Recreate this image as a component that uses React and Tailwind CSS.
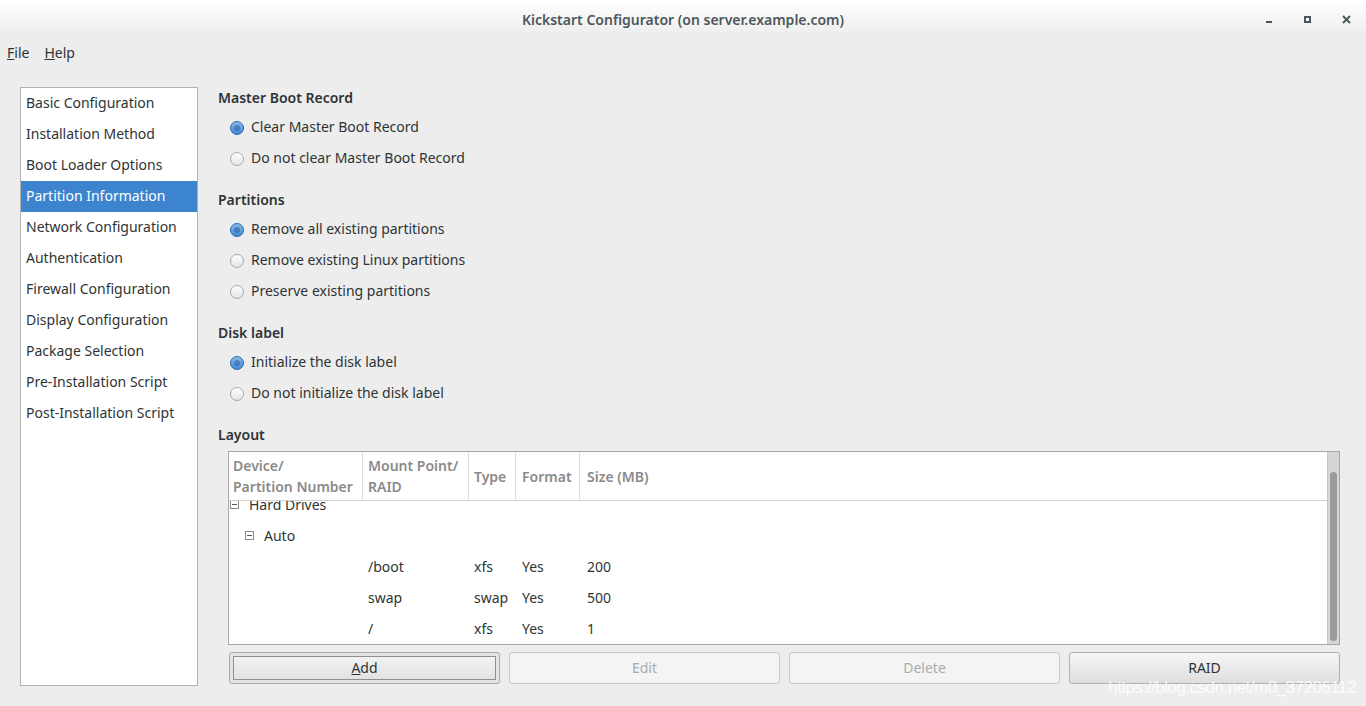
import React from 'react'

const sections = [
  "Basic Configuration",
  "Installation Method",
  "Boot Loader Options",
  "Partition Information",
  "Network Configuration",
  "Authentication",
  "Firewall Configuration",
  "Display Configuration",
  "Package Selection",
  "Pre-Installation Script",
  "Post-Installation Script",
];

const groups = [
  { title: "Master Boot Record", options: ["Clear Master Boot Record", "Do not clear Master Boot Record"] },
  { title: "Partitions", options: ["Remove all existing partitions", "Remove existing Linux partitions", "Preserve existing partitions"] },
  { title: "Disk label", options: ["Initialize the disk label", "Do not initialize the disk label"] },
];

const parts = [
  { mount: "/boot", type: "xfs", format: "Yes", size: "200" },
  { mount: "swap", type: "swap", format: "Yes", size: "500" },
  { mount: "/", type: "xfs", format: "Yes", size: "1" },
];

function Radio({ checked }) {
  return (
    <svg width="14" height="14" viewBox="0 0 14 14" className="shrink-0 mt-[2px]">
      <defs>
        <linearGradient id="rOff" x1="0" y1="0" x2="0" y2="1">
          <stop offset="0" stopColor="#ffffff" />
          <stop offset="1" stopColor="#e4e4e4" />
        </linearGradient>
        <linearGradient id="rOn" x1="0" y1="0" x2="0" y2="1">
          <stop offset="0" stopColor="#8fbbea" />
          <stop offset="1" stopColor="#3c86d6" />
        </linearGradient>
      </defs>
      <circle cx="7" cy="7" r="6.5" fill={checked ? "url(#rOn)" : "url(#rOff)"} stroke={checked ? "#3069a8" : "#a8a8a8"} />
      {checked && <circle cx="7" cy="7" r="3" fill="#2a5f9e" opacity="0.55" />}
    </svg>
  );
}

function Expander({ className }) {
  return (
    <svg width="9" height="9" viewBox="0 0 9 9" className={className}>
      <rect x="0.5" y="0.5" width="8" height="8" fill="#fff" stroke="#8a8a8a" />
      <line x1="2" y1="4.5" x2="7" y2="4.5" stroke="#555" />
    </svg>
  );
}

const App = () => {
  return (
    <div className="relative w-[1366px] h-[706px] overflow-hidden bg-[#ededed] text-[#2e3436] text-[14px]" style={{ fontFamily: '"Noto Sans", "Open Sans", sans-serif' }}>
      {/* title bar */}
      <div className="h-[38px] bg-gradient-to-b from-[#ffffff] to-[#ececec] flex items-center relative">
        <div className="flex-1 text-center text-[#4d575b] font-semibold text-[14px]">Kickstart Configurator (on server.example.com)</div>
        <div className="absolute right-0 top-0 h-[38px] flex items-center">
          <div className="w-[39px] flex justify-center pt-[4px]"><div className="w-[6px] h-[2px] bg-[#4d575b] mt-[2px]"></div></div>
          <div className="w-[39px] flex justify-center"><div className="w-[7px] h-[7px] border-2 border-[#4d575b]"></div></div>
          <div className="w-[39px] flex justify-center text-[#4d575b]">
            <svg width="9" height="9" viewBox="0 0 9 9"><path d="M1 1L8 8M8 1L1 8" stroke="#4d575b" strokeWidth="2" /></svg>
          </div>
        </div>
      </div>

      {/* menu */}
      <div className="h-[30px] flex items-center gap-[15px] px-[7px] pb-[2px]">
        <span><span className="underline">F</span>ile</span>
        <span><span className="underline">H</span>elp</span>
      </div>

      <div className="flex pt-[19px] pl-[20px] pr-[26px]">
        <div className="w-[178px] h-[599px] bg-white border border-[#b1b1b1] shrink-0">
          {sections.map((s, i) => (
            <div key={s} className={"h-[31px] flex items-center px-[5px] pb-[2px] " + (i === 3 ? "bg-[#3d84cf] text-white" : "")}>{s}</div>
          ))}
        </div>

        <div className="flex-1 ml-[20px]">
          {groups.map((g, gi) => (
            <div key={g.title} className={gi > 0 ? "mt-[15px]" : ""}>
              <div className="h-[25px] leading-[22px] font-semibold">{g.title}</div>
              {g.options.map((o, oi) => (
                <div key={o} className="h-[31px] flex items-center gap-[7px] pl-[12px] pb-[2px]">
                  <Radio checked={oi === 0} />
                  <span>{o}</span>
                </div>
              ))}
            </div>
          ))}

          <div className="mt-[15px] h-[25px] leading-[22px] font-semibold">Layout</div>
          <div className="ml-[10px] mt-[2px] h-[194px] bg-white border border-[#a8a8a8] flex">
            <div className="flex-1 flex flex-col min-w-0">
              <div className="h-[49px] border-b border-[#d0d0d0] flex text-[#8a8a8a] font-semibold leading-[21px] shrink-0">
                <div className="w-[134px] border-r border-[#dcdcdc] px-[4px] flex flex-col justify-center">
                  <div>Device/</div><div>Partition Number</div>
                </div>
                <div className="w-[106px] border-r border-[#dcdcdc] px-[5px] flex flex-col justify-center">
                  <div>Mount Point/</div><div>RAID</div>
                </div>
                <div className="w-[47px] border-r border-[#dcdcdc] px-[5px] flex items-center">Type</div>
                <div className="w-[64px] border-r border-[#dcdcdc] px-[6px] flex items-center">Format</div>
                <div className="flex-1 px-[7px] flex items-center">Size (MB)</div>
              </div>
              <div className="flex-1 overflow-hidden">
                <div className="mt-[-12px]">
                  <div className="h-[31px] flex items-center pl-[1px]">
                    <Expander className="mr-[10px]" />
                    <span>Hard Drives</span>
                  </div>
                  <div className="h-[31px] flex items-center pl-[16px]">
                    <Expander className="mr-[10px]" />
                    <span>Auto</span>
                  </div>
                  {parts.map((p) => (
                    <div key={p.size} className="h-[31px] flex items-center">
                      <div className="w-[134px]"></div>
                      <div className="w-[106px] px-[5px]">{p.mount}</div>
                      <div className="w-[47px] px-[5px]">{p.type}</div>
                      <div className="w-[64px] px-[6px]">{p.format}</div>
                      <div className="flex-1 px-[7px]">{p.size}</div>
                    </div>
                  ))}
                </div>
              </div>
            </div>
            <div className="w-[12px] bg-[#d6d6d6] border-l border-[#c6c6c6] flex justify-center pt-[20px] pb-[3px] shrink-0">
              <div className="w-[7px] h-full rounded-full bg-[#9b9b9b]"></div>
            </div>
          </div>

          <div className="ml-[11px] mt-[7px] grid grid-cols-4 gap-[9px] h-[31px]">
            <button className="rounded-[3px] border border-[#a8a8a8] bg-[#e4e4e4] p-[3px]">
              <div className="h-full border border-[#8f8f8f] bg-gradient-to-b from-[#f2f2f2] to-[#e3e3e3] flex items-center justify-center pb-[1px]"><span><span className="underline">A</span>dd</span></div>
            </button>
            <button className="rounded-[3px] border border-[#c9c9c9] bg-[#f4f4f4] text-[#a9acac] pb-[1px]">Edit</button>
            <button className="rounded-[3px] border border-[#c9c9c9] bg-[#f4f4f4] text-[#a9acac] pb-[1px]">Delete</button>
            <button className="rounded-[3px] border border-[#b0b0b0] bg-gradient-to-b from-[#f6f6f6] to-[#dedede] pb-[1px]">RAID</button>
          </div>
        </div>
      </div>

      <div className="absolute right-[10px] bottom-[6px] text-[17px] text-white/80 tracking-[-0.5px]" style={{ fontFamily: '"Liberation Sans", sans-serif' }}>https://blog.csdn.net/m0_37206112</div>
    </div>
  )
}

export default App
